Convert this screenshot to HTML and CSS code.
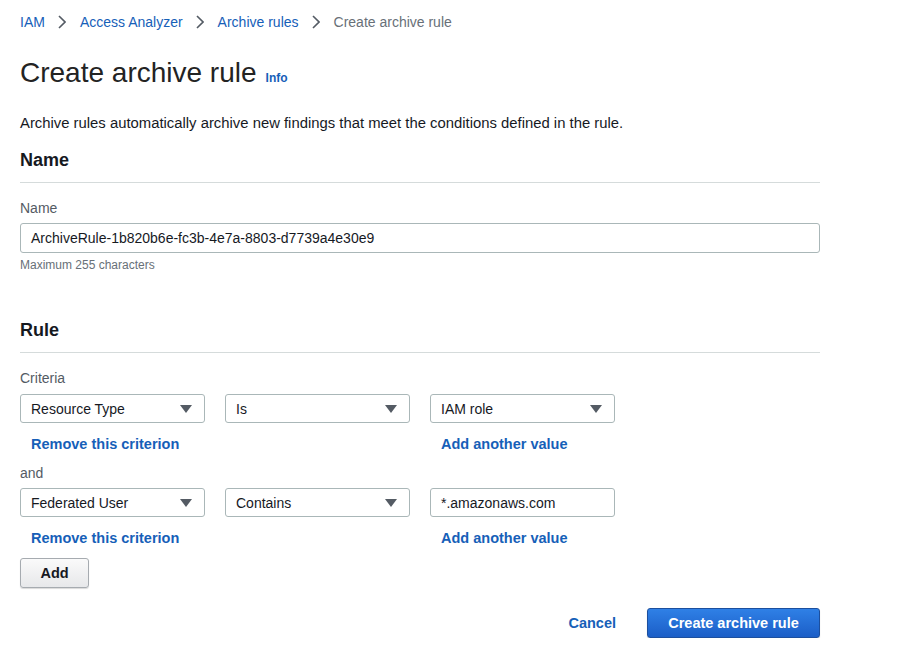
FILE: index.html
```html
<!DOCTYPE html>
<html lang="en">
<head>
<meta charset="utf-8">
<title>Create archive rule</title>
<link rel="stylesheet" href="styles.css">
</head>
<body>
<div class="page">
  <nav class="breadcrumb">
    <a class="crumb" href="#">IAM</a>
    <svg class="chev" width="8" height="14" viewBox="0 0 8 14"><path d="M1 1 L7 7 L1 13" fill="none" stroke="#545b64" stroke-width="1.6"/></svg>
    <a class="crumb" href="#">Access Analyzer</a>
    <svg class="chev" width="8" height="14" viewBox="0 0 8 14"><path d="M1 1 L7 7 L1 13" fill="none" stroke="#545b64" stroke-width="1.6"/></svg>
    <a class="crumb" href="#">Archive rules</a>
    <svg class="chev" width="8" height="14" viewBox="0 0 8 14"><path d="M1 1 L7 7 L1 13" fill="none" stroke="#545b64" stroke-width="1.6"/></svg>
    <span class="crumb current">Create archive rule</span>
  </nav>

  <h1 class="title">Create archive rule <a class="info" href="#">Info</a></h1>
  <p class="desc">Archive rules automatically archive new findings that meet the conditions defined in the rule.</p>

  <section class="section">
    <h2 class="section-head">Name</h2>
    <label class="label">Name</label>
    <div class="input wide">ArchiveRule-1b820b6e-fc3b-4e7a-8803-d7739a4e30e9</div>
    <div class="hint">Maximum 255 characters</div>
  </section>

  <section class="section rule">
    <h2 class="section-head">Rule</h2>
    <label class="label">Criteria</label>
    <div class="crit-row">
      <div class="select"><span>Resource Type</span><i class="tri"></i></div>
      <div class="select"><span>Is</span><i class="tri"></i></div>
      <div class="select"><span>IAM role</span><i class="tri"></i></div>
    </div>
    <div class="link-row">
      <a class="act" href="#">Remove this criterion</a>
      <span></span>
      <a class="act" href="#">Add another value</a>
    </div>
    <label class="label and">and</label>
    <div class="crit-row second">
      <div class="select"><span>Federated User</span><i class="tri"></i></div>
      <div class="select"><span>Contains</span><i class="tri"></i></div>
      <div class="input"><span>*.amazonaws.com</span></div>
    </div>
    <div class="link-row">
      <a class="act" href="#">Remove this criterion</a>
      <span></span>
      <a class="act" href="#">Add another value</a>
    </div>
    <button class="btn-normal">Add</button>
  </section>

  <div class="footer">
    <a class="cancel" href="#">Cancel</a>
    <button class="btn-primary">Create archive rule</button>
  </div>
</div>
</body>
</html>
```

FILE: styles.css
```css
* { box-sizing: border-box; }
body {
  margin: 0;
  background: #ffffff;
  font-family: "Liberation Sans", Arial, Helvetica, sans-serif;
  color: #16191f;
}
a { text-decoration: none; }
.page {
  width: 840px;
  padding: 12px 20px 0 20px;
}
.breadcrumb {
  display: flex;
  align-items: center;
  height: 20px;
  font-size: 14px;
  line-height: 20px;
}
.crumb { color: #1660b8; }
.crumb.current { color: #687078; }
.chev { margin: 0 14px 0 13px; display: block; }

.title {
  margin: 24px 0 0 0;
  font-size: 28px;
  line-height: 34px;
  font-weight: normal;
  color: #232323;
  display: flex;
  align-items: baseline;
}
.info {
  font-size: 12px;
  font-weight: bold;
  color: #1660b8;
  margin-left: 9px;
}
.desc {
  margin: 18px 0 0 0;
  font-size: 14.85px;
  line-height: 20px;
  color: #16191f;
}
.section { display: flex; flex-direction: column; align-items: flex-start; }
.section-head {
  margin: 15px 0 0 0;
  width: 800px;
  font-size: 18px;
  line-height: 24px;
  font-weight: bold;
  color: #16191f;
  padding-bottom: 10px;
  border-bottom: 1px solid #d5dbdb;
}
.rule .section-head { margin-top: 45px; }
.label {
  margin-top: 15px;
  font-size: 14px;
  line-height: 20px;
  color: #545b64;
}
.label.and { margin-top: 9px; }
.input, .select {
  margin-top: 5px;
  height: 30px;
  border: 1px solid #aab7b8;
  border-radius: 3px;
  font-size: 14px;
  color: #16191f;
  padding: 0 11px 0 10px;
  display: flex;
  align-items: center;
  background: #fff;
}
.input.wide { width: 800px; }
.hint {
  margin-top: 4px;
  font-size: 12px;
  line-height: 16px;
  color: #687078;
}
.crit-row {
  display: grid;
  grid-template-columns: 185px 185px 185px;
  column-gap: 20px;
  margin-top: 6px;
}
.crit-row.second { margin-top: 5px; }
.crit-row .select, .crit-row .input { margin-top: 0; height: 29px; }
.select { justify-content: space-between; }
.tri {
  width: 0; height: 0;
  border-left: 6px solid transparent;
  border-right: 6px solid transparent;
  border-top: 8px solid #545b64;
  margin-right: 1px;
}
.link-row {
  display: grid;
  grid-template-columns: 185px 185px 185px;
  column-gap: 20px;
  margin-top: 11px;
  line-height: 20px;
}
.act {
  color: #1660b8;
  font-weight: bold;
  font-size: 14.5px;
  padding-left: 11px;
}
.btn-normal {
  margin-top: 10px;
  width: 69px;
  height: 30px;
  border: 1px solid #a6abb0;
  border-radius: 3px;
  background: linear-gradient(#fafafa, #e7e8ea);
  font-family: inherit;
  font-size: 14.5px;
  font-weight: bold;
  color: #16191f;
  box-shadow: 0 1px 1px rgba(0,0,0,0.15);
}
.footer {
  width: 800px;
  margin-top: 20px;
  display: flex;
  justify-content: flex-end;
  align-items: center;
}
.cancel {
  color: #1660b8;
  font-weight: bold;
  font-size: 14.5px;
  margin-right: 31px;
}
.btn-primary {
  width: 173px;
  height: 30px;
  border: 1px solid #1c4f9e;
  border-radius: 3px;
  background: linear-gradient(#2f80e6, #1b5ec7);
  color: #ffffff;
  font-family: inherit;
  font-size: 14.5px;
  font-weight: bold;
  box-shadow: 0 1px 1px rgba(0,0,0,0.2);
}
```
